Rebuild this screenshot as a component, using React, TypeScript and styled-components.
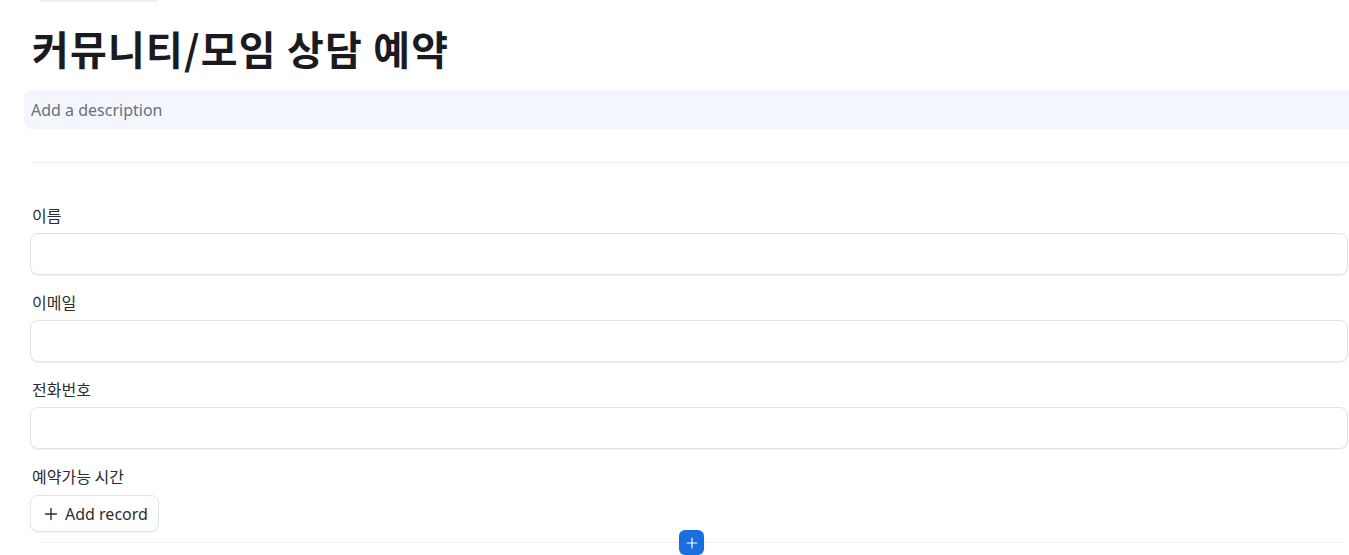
import React from "react";
import styled, { createGlobalStyle } from "styled-components";

const Global = createGlobalStyle`
  html, body { margin: 0; padding: 0; background: #ffffff; overflow: hidden; }
  body { font-family: "Noto Sans", "Noto Sans CJK KR", sans-serif; color: #1f2328; }
  * { box-sizing: border-box; }
`;

const Page = styled.div`
  width: 1349px;
  height: 555px;
  overflow: hidden;
  position: relative;
`;

const Content = styled.div`
  width: 1318px;
  margin-left: 30px;
  display: flex;
  flex-direction: column;
`;

const TopStub = styled.div`
  width: 118px;
  height: 2px;
  margin-left: 10px;
  background: #efefef;
  border-radius: 0 0 6px 6px;
`;

const Title = styled.h1`
  margin: 22px 0 0 2px;
  height: 48px;
  line-height: 48px;
  font-size: 40px;
  font-weight: 700;
  letter-spacing: 1.2px;
  color: #1b1b1f;
  font-family: "Noto Sans CJK KR", "Noto Sans", sans-serif;
`;

const Description = styled.div`
  margin: 18px -40px 0 -6px;
  height: 39px;
  padding: 0 7px;
  display: flex;
  align-items: center;
  background: #f3f7fd;
  border-radius: 8px;
  font-size: 16px;
  color: #6b6f7a;
  font-family: "Noto Sans", "Noto Sans CJK KR", sans-serif;
`;

const Divider = styled.hr`
  margin: 33px -40px 0 2px;
  border: 0;
  height: 1px;
  background: #f0f1f3;
`;

const Fields = styled.div`
  margin-top: 41px;
  display: flex;
  flex-direction: column;
  gap: 16px;
`;

const Field = styled.div`
  display: flex;
  flex-direction: column;
  gap: 7px;
`;

const Label = styled.label`
  margin-left: 2px;
  font-size: 16px;
  line-height: 22px;
  color: #2b2d31;
  font-family: "Noto Sans CJK KR", "Noto Sans", sans-serif;
`;

const Input = styled.div`
  height: 42px;
  border: 1px solid #e1e3e6;
  border-radius: 8px;
  background: #fff;
  box-shadow: 0 1px 1px rgba(0, 0, 0, 0.05);
`;

const AddButton = styled.button`
  align-self: flex-start;
  margin-top: 1px;
  height: 37px;
  padding: 0 10px 0 12px;
  display: flex;
  align-items: center;
  gap: 6px;
  border: 1px solid #e3e5e8;
  border-radius: 8px;
  background: #fff;
  box-shadow: 0 1px 1px rgba(0, 0, 0, 0.05);
  font-size: 16px;
  color: #2b2d31;
  font-family: "Noto Sans", "Noto Sans CJK KR", sans-serif;
  cursor: pointer;
`;

const BottomRow = styled.div`
  position: relative;
  margin: 10px 6px 0 10px;
  height: 1px;
  background: #eeeff1;
`;

const FloatPlus = styled.button`
  position: absolute;
  left: 639px;
  top: -12px;
  width: 25px;
  height: 25px;
  padding: 0;
  border: 0;
  border-radius: 6px;
  background: #1a6fe0;
  display: flex;
  align-items: center;
  justify-content: center;
`;

const PlusIcon = ({ size, color }: { size: number; color: string }) => (
  <svg width={size} height={size} viewBox="0 0 16 16" fill="none">
    <path d="M8 2.5v11M2.5 8h11" stroke={color} strokeWidth="1.4" strokeLinecap="round" />
  </svg>
);

const fields = ["이름", "이메일", "전화번호"];

export default function App() {
  return (
    <Page>
      <Global />
      <Content>
        <TopStub />
        <Title>커뮤니티/모임 상담 예약</Title>
        <Description>Add a description</Description>
        <Divider />
        <Fields>
          {fields.map((f) => (
            <Field key={f}>
              <Label>{f}</Label>
              <Input />
            </Field>
          ))}
          <Field>
            <Label>예약가능 시간</Label>
            <AddButton>
              <PlusIcon size={16} color="#2b2d31" />
              Add record
            </AddButton>
          </Field>
        </Fields>
        <BottomRow>
          <FloatPlus>
            <PlusIcon size={14} color="#ffffff" />
          </FloatPlus>
        </BottomRow>
      </Content>
    </Page>
  );
}
